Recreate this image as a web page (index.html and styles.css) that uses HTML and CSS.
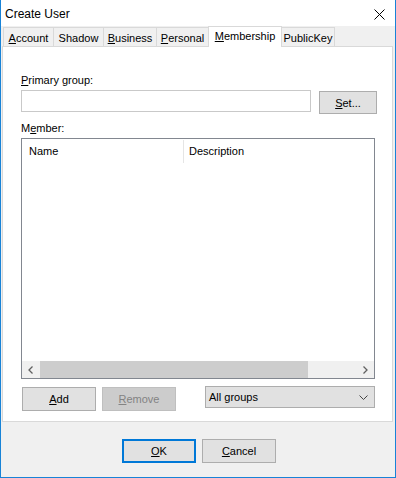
FILE: index.html
```html
<!DOCTYPE html>
<html lang="en">
<head>
  <meta charset="UTF-8">
  <title>Create User</title>
  <link rel="stylesheet" href="styles.css">
</head>
<body>
  <div class="window">
    <div class="titlebar">
      <span class="title">Create User</span>
      <svg class="close" width="11" height="11" viewBox="0 0 11 11">
        <path d="M0.5 0.5 L10.5 10.5 M10.5 0.5 L0.5 10.5" stroke="#000" stroke-width="1" fill="none"/>
      </svg>
    </div>

    <div class="tabstrip">
      <div class="tab w51"><u>A</u>ccount</div>
      <div class="tab w51">Shadow</div>
      <div class="tab w54"><u>B</u>usiness</div>
      <div class="tab w53"><u>P</u>ersonal</div>
      <div class="tab active w74"><u>M</u>embership</div>
      <div class="tab w54">PublicKey</div>
    </div>

    <div class="panel">
      <div class="label"><u>P</u>rimary group:</div>
      <div class="group-row">
        <div class="textbox"></div>
        <div class="btn set-btn"><u>S</u>et...</div>
      </div>

      <div class="label member-label">M<u>e</u>mber:</div>
      <div class="listview">
        <div class="list-header">
          <div class="col col-name">Name</div>
          <div class="col col-desc">Description</div>
        </div>
        <div class="list-body"></div>
        <div class="hscroll">
          <div class="arrow">
            <svg width="5" height="8" viewBox="0 0 5 8"><path d="M4.5 0.5 L1 4 L4.5 7.5" stroke="#606060" stroke-width="1.3" fill="none"/></svg>
          </div>
          <div class="track"><div class="thumb"></div></div>
          <div class="arrow">
            <svg width="5" height="8" viewBox="0 0 5 8"><path d="M0.5 0.5 L4 4 L0.5 7.5" stroke="#606060" stroke-width="1.3" fill="none"/></svg>
          </div>
        </div>
      </div>

      <div class="action-row">
        <div class="btn add-btn"><u>A</u>dd</div>
        <div class="btn disabled remove-btn"><u>R</u>emove</div>
        <div class="combo">
          <span>All groups</span>
          <svg width="9" height="5" viewBox="0 0 9 5"><path d="M0.5 0.5 L4.5 4.5 L8.5 0.5" stroke="#444" stroke-width="1" fill="none"/></svg>
        </div>
      </div>
    </div>

    <div class="footer">
      <div class="btn default"><u>O</u>K</div>
      <div class="btn"><u>C</u>ancel</div>
    </div>
  </div>
</body>
</html>
```

FILE: styles.css
```css
body {
  margin: 0;
  font-family: "Liberation Sans", Arial, sans-serif;
  font-size: 11px;
  color: #000;
  background: #fff;
}

.window {
  width: 396px;
  height: 478px;
  box-sizing: border-box;
  border: 1px solid #1883d7;
  border-top: none;
  background: #f0f0f0;
  display: flex;
  flex-direction: column;
}

/* title bar */
.titlebar {
  height: 26px;
  background: #fff;
  display: flex;
  align-items: center;
  justify-content: space-between;
  padding: 0 10px 0 4px;
  flex-shrink: 0;
}

.title {
  font-size: 12px;
  padding-top: 1px;
}

.close {
  margin-top: 2px;
}

/* tabs */
.tabstrip {
  display: flex;
  align-items: flex-end;
  height: 20px;
  padding-left: 2px;
  flex-shrink: 0;
}

.tab {
  height: 19px;
  box-sizing: border-box;
  border: 1px solid #d9d9d9;
  border-bottom: none;
  margin-left: -1px;
  background: #f0f0f0;
  text-align: center;
  line-height: 18px;
  padding-top: 1px;
}

.tab:first-child {
  margin-left: 0;
}

.tab.active {
  height: 21px;
  margin-bottom: -1px;
  background: #fff;
  position: relative;
  z-index: 1;
  line-height: 18px;
  padding-top: 0;
}

.w51 { width: 51px; }
.w53 { width: 53px; }
.w54 { width: 54px; }
.w74 { width: 74px; }

/* panel */
.panel {
  height: 376px;
  box-sizing: border-box;
  margin: 0 2px 0 1px;
  border: 1px solid #d9d9d9;
  background: #fff;
  padding: 27px 0 0 18px;
  flex-shrink: 0;
}

.label {
  line-height: 13px;
  height: 13px;
  margin-bottom: 3px;
}

.member-label {
  margin-top: 8px;
}

.group-row {
  display: flex;
  align-items: flex-start;
}

.textbox {
  width: 290px;
  height: 22px;
  box-sizing: border-box;
  border: 1px solid #c9c9c9;
  background: #fff;
}

.btn {
  width: 74px;
  height: 24px;
  box-sizing: border-box;
  border: 1px solid #adadad;
  background: #e1e1e1;
  display: flex;
  align-items: center;
  justify-content: center;
}

.set-btn {
  width: 58px;
  height: 23px;
  margin: 1px 0 0 8px;
}

.btn.disabled {
  background: #cccccc;
  border-color: #bfbfbf;
  color: #838383;
}

.btn.default {
  border: 2px solid #0078d7;
}

/* list view */
.listview {
  width: 354px;
  height: 241px;
  box-sizing: border-box;
  border: 1px solid #828790;
  display: flex;
  flex-direction: column;
}

.list-header {
  display: flex;
  height: 24px;
  flex-shrink: 0;
}

.col {
  line-height: 24px;
  padding-left: 7px;
}

.col-name {
  width: 154px;
  border-right: 1px solid #e5e5e5;
  margin-top: 1px;
  line-height: 23px;
}

.col-desc {
  padding-left: 5px;
}

.list-body {
  flex: 1;
}

.hscroll {
  display: flex;
  height: 17px;
  background: #f0f0f0;
  flex-shrink: 0;
}

.arrow {
  width: 17px;
  display: flex;
  align-items: center;
  justify-content: center;
}

.track {
  flex: 1;
  padding: 0 1px;
}

.thumb {
  width: 268px;
  height: 100%;
  background: #cdcdcd;
}

/* bottom row in panel */
.action-row {
  display: flex;
  align-items: flex-start;
  margin-top: 7px;
}

.add-btn {
  margin: 1px 0 0 1px;
}

.remove-btn {
  margin: 1px 0 0 6px;
}

.combo {
  width: 170px;
  height: 22px;
  box-sizing: border-box;
  margin-left: 29px;
  border: 1px solid #adadad;
  background: #e1e1e1;
  display: flex;
  align-items: center;
  justify-content: space-between;
  padding: 0 6px 0 3px;
}

/* dialog buttons */
.footer {
  flex: 1;
  display: flex;
  justify-content: center;
  align-items: flex-start;
  gap: 6px;
  padding: 17px 0 0 2px;
}
```
